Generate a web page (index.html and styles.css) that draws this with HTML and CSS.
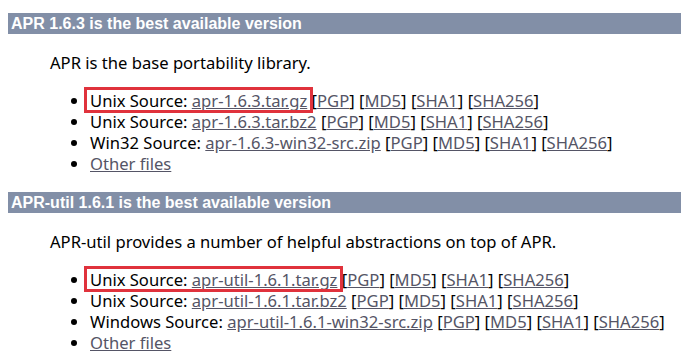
FILE: index.html
```html
<!DOCTYPE html>
<html lang="en">
<head>
    <meta charset="UTF-8">
    <title>Apache Portable Runtime - Download</title>
    <link rel="stylesheet" href="styles.css">
</head>
<body>

<!-- APR -->
<h3 class="secao">APR 1.6.3 is the best available version</h3>
<div class="bloco">
    <p>APR is the base portability library.</p>
    <ul>
        <li><span class="destaque">Unix Source: <a href="#">apr-1.6.3.tar.gz</a></span> [<a href="#">PGP</a>] [<a href="#">MD5</a>] [<a href="#">SHA1</a>] [<a href="#">SHA256</a>]</li>
        <li>Unix Source: <a href="#">apr-1.6.3.tar.bz2</a> [<a href="#">PGP</a>] [<a href="#">MD5</a>] [<a href="#">SHA1</a>] [<a href="#">SHA256</a>]</li>
        <li>Win32 Source: <a href="#">apr-1.6.3-win32-src.zip</a> [<a href="#">PGP</a>] [<a href="#">MD5</a>] [<a href="#">SHA1</a>] [<a href="#">SHA256</a>]</li>
        <li><a href="#">Other files</a></li>
    </ul>
</div>

<!-- APR-util -->
<h3 class="secao">APR-util 1.6.1 is the best available version</h3>
<div class="bloco">
    <p>APR-util provides a number of helpful abstractions on top of APR.</p>
    <ul>
        <li><span class="destaque">Unix Source: <a href="#">apr-util-1.6.1.tar.gz</a></span> [<a href="#">PGP</a>] [<a href="#">MD5</a>] [<a href="#">SHA1</a>] [<a href="#">SHA256</a>]</li>
        <li>Unix Source: <a href="#">apr-util-1.6.1.tar.bz2</a> [<a href="#">PGP</a>] [<a href="#">MD5</a>] [<a href="#">SHA1</a>] [<a href="#">SHA256</a>]</li>
        <li>Windows Source: <a href="#">apr-util-1.6.1-win32-src.zip</a> [<a href="#">PGP</a>] [<a href="#">MD5</a>] [<a href="#">SHA1</a>] [<a href="#">SHA256</a>]</li>
        <li><a href="#">Other files</a></li>
    </ul>
</div>

</body>
</html>
```

FILE: styles.css
```css
body {
    font-family: "Noto Sans", sans-serif;
    font-size: 16.6px;
    color: #000;
    background-color: #fff;
    margin: 13px 0 0 8px;
}
.secao {
    background-color: #828fa7;
    color: white;
    font-family: "Liberation Sans", Arial, sans-serif;
    font-size: 16px;
    font-weight: bold;
    height: 21px;
    line-height: 21px;
    padding-left: 3px;
    margin: 0;
}
.bloco {
    padding-left: 42px;
}
.bloco p {
    margin: 0;
    padding-top: 18px;
    line-height: 21px;
}
ul {
    margin: 17px 0 18px 0;
    padding-left: 40px;
    line-height: 21px;
}
a {
    color: #555566;
}
.destaque {
    position: relative;
}
.destaque::after {
    content: "";
    position: absolute;
    left: -6px;
    right: -6px;
    top: -2px;
    bottom: -1px;
    border: 3px solid #e0323c;
}
```
